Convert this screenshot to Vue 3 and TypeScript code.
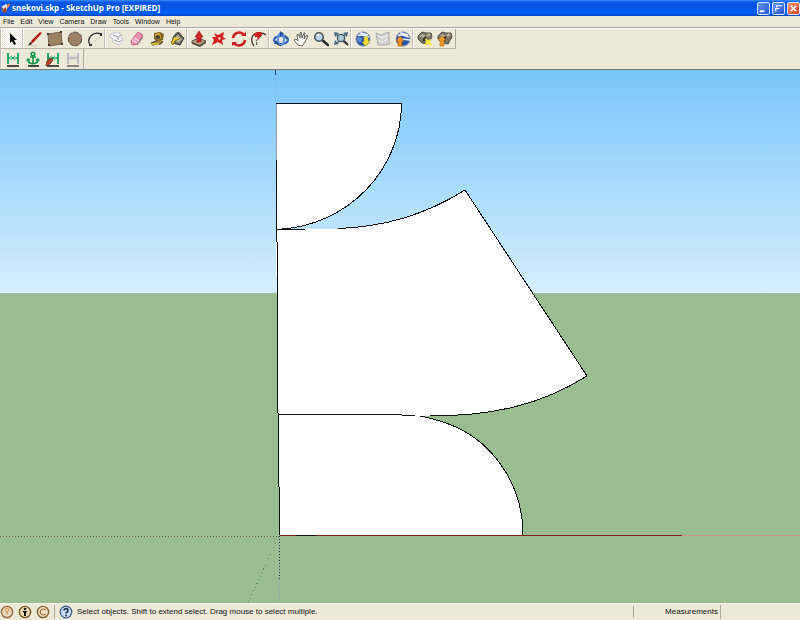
<script setup lang="ts">
interface Tool { name: string; kind: string }

const menus: string[] = ['File', 'Edit', 'View', 'Camera', 'Draw', 'Tools', 'Window', 'Help']

const groups: Tool[][] = [
  [{ name: 'Select', kind: 'select' }],
  [
    { name: 'Line', kind: 'line' },
    { name: 'Rectangle', kind: 'rect' },
    { name: 'Circle', kind: 'circle' },
    { name: 'Arc', kind: 'arc' },
  ],
  [
    { name: 'Make Component', kind: 'component' },
    { name: 'Eraser', kind: 'eraser' },
    { name: 'Tape Measure', kind: 'tape' },
    { name: 'Paint Bucket', kind: 'paint' },
  ],
  [
    { name: 'Push/Pull', kind: 'push' },
    { name: 'Move', kind: 'move' },
    { name: 'Rotate', kind: 'rotate' },
    { name: 'Offset', kind: 'offset' },
  ],
  [
    { name: 'Orbit', kind: 'orbit' },
    { name: 'Pan', kind: 'pan' },
    { name: 'Zoom', kind: 'zoom' },
    { name: 'Zoom Extents', kind: 'extents' },
  ],
  [
    { name: 'Get Current View', kind: 'getview' },
    { name: 'Toggle Terrain', kind: 'terrain' },
    { name: 'Place Model', kind: 'place' },
  ],
  [
    { name: 'Get Models', kind: 'getmodels' },
    { name: 'Share Model', kind: 'share' },
  ],
]

const extras: Tool[] = [
  { name: 'Dimension', kind: 'dim' },
  { name: 'Anchor', kind: 'anchor' },
  { name: 'Edit Dimension', kind: 'dimedit' },
  { name: 'Dimension Off', kind: 'dimoff' },
]
</script>

<template>
  <div class="window">
    <header class="title">
      <svg class="logo" viewBox="0 0 12 12" aria-hidden="true">
        <path d="M1 5 6 2l2 2-2 6-4-1z" fill="#e8e4e0" />
        <path d="M2 8l4-3 1 5-3 1z" fill="#a34a32" />
        <path d="M7 3l3-2-1 4-2 1z" fill="#f08a4c" />
        <path d="M1 5l2 1-1 3z" fill="#283868" />
      </svg>
      <h1>snekovi.skp - SketchUp Pro [EXPIRED]</h1>
      <div class="controls">
        <button type="button" aria-label="Minimize">
          <svg viewBox="0 0 12 12"><path d="M2 9h5" stroke="#fff" stroke-width="2" /></svg>
        </button>
        <button type="button" aria-label="Restore">
          <svg viewBox="0 0 12 12"><path d="M4 5V3h6M3 9V6h4" fill="none" stroke="#fff" stroke-width="1.3" /></svg>
        </button>
        <button type="button" class="close" aria-label="Close">
          <svg viewBox="0 0 12 12"><path d="M3 3l6 6M9 3L3 9" stroke="#fff" stroke-width="1.6" /></svg>
        </button>
      </div>
    </header>

    <nav class="menu">
      <button v-for="m in menus" :key="m" type="button">{{ m }}</button>
    </nav>

    <div class="bars">
      <div v-for="(row, r) in [groups, [extras]]" :key="r" class="bar">
        <div v-for="(group, i) in row" :key="i" class="group">
          <button
            v-for="t in group"
            :key="t.kind"
            type="button"
            :class="{ active: t.kind === 'select' }"
            :aria-label="t.name"
          >
            <svg viewBox="0 0 16 16">
              <path v-if="t.kind === 'select'" d="M5 2v10l2-2 2 4 2-1-2-4h3z" fill="#0a0a0a" />
              <g v-else-if="t.kind === 'line'">
                <path d="M2 14 5 9l8-8 2 1-8 9z" fill="#cf2020" />
                <path d="M5 10 13 2" stroke="#7c1010" />
                <path d="M1 15l2-4 2 2z" fill="#222" />
                <path d="M4 15h6" stroke="#c9bba8" />
              </g>
              <g v-else-if="t.kind === 'rect'">
                <path d="M1 3 14 1l1 12-13 2z" fill="#9b8064" stroke="#75604c" />
                <path d="M0 2h2v2H0zM13 0h2v2h-2zM1 13h2v2H1zM14 12h2v2h-2z" fill="#3c3228" />
              </g>
              <circle v-else-if="t.kind === 'circle'" cx="8" cy="8" r="6.8" fill="#9b8064" stroke="#4c4238" stroke-dasharray="5 1" />
              <g v-else-if="t.kind === 'arc'">
                <path d="M3 14C-1 7 6 0 14 3" fill="none" stroke="#282828" stroke-width="1.2" />
                <path d="M4 14 14 4" stroke="#cdc8bc" stroke-dasharray="2 1" />
                <path d="M13 2h2v3h-2zM2 13h3v2H2z" fill="#333" />
              </g>
              <g v-else-if="t.kind === 'component'">
                <path d="M2 3l6-2 5 3-1 3 3 2-5 5-7-3 1-3-3-2z" fill="#f6f6f8" stroke="#c4c4ca" />
                <path d="M4 4l5 2 3-2M5 9l5 2 3-2M9 6v3" fill="none" stroke="#9c9ca4" />
              </g>
              <g v-else-if="t.kind === 'eraser'">
                <path d="M2 10 9 1l5 3-6 9-5 1z" fill="#f08cac" stroke="#c46484" />
                <path d="M3 9l5 3M5 7l5 3" stroke="#fbd0dc" stroke-width="1.5" />
                <path d="M8 14l6-8" stroke="#746068" />
              </g>
              <g v-else-if="t.kind === 'tape'">
                <path d="M5 2l6-1 4 2-1 6-5 2-4-3z" fill="#7c6428" />
                <path d="M6 3l5-1 1 5-4 2z" fill="#dcae20" />
                <circle cx="9" cy="6" r="2" fill="#3c3c38" />
                <path d="M9 9 2 12l1 2 9-1 2-3" fill="#a08838" stroke="#3c3a34" />
                <path d="M2 13h8" stroke="#ecd040" stroke-width="1.4" />
              </g>
              <g v-else-if="t.kind === 'paint'">
                <path d="M4 6l5-4 6 5-4 7-7-2z" fill="#75726a" stroke="#333" />
                <path d="M8 4l5 4-4 4-3-3z" fill="#bcb9ae" />
                <path d="M5 6 2 12l2 2 2-4 6-3" fill="#e4c735" stroke="#806e18" />
                <path d="M6 5c0-5 7-5 6 1" fill="none" stroke="#393939" />
              </g>
              <g v-else-if="t.kind === 'push'">
                <path d="M1 10l6-3 8 3-6 5-8-3z" fill="#b09c80" stroke="#5c5042" />
                <path d="M1 11l8 3v2l-8-3zM9 14l6-4v2l-6 4z" fill="#5c5040" />
                <path d="M6 11V6H4l4-6 4 6h-2v5z" fill="#d02020" stroke="#8b1515" stroke-width=".6" />
              </g>
              <g v-else-if="t.kind === 'move'">
                <path d="M3 2l4 2 6-3-1 5 3 2-4 1 1 5-5-3-6 3 2-5-2-3 4 0z" fill="#d32020" />
                <path d="M8 6l2 1-1 2-2-1z" fill="#eadccb" />
              </g>
              <g v-else-if="t.kind === 'rotate'" fill="none" stroke="#c82020" stroke-width="2.6">
                <path d="M2 7c1-6 8-7 11-3M14 9c-1 6-8 7-11 3" />
                <path d="M10 5h5V1zM6 11H1v4z" fill="#c82020" stroke="none" />
              </g>
              <g v-else-if="t.kind === 'offset'" fill="none">
                <path d="M3 15C-1 10 0 2 8 2c3 0 5 0 7 2" stroke="#4a302c" stroke-width="1.3" />
                <path d="M6 14c-2-4 1-8 5-9" stroke="#4c3028" stroke-dasharray="3 1" />
                <path d="M3 3c2-2 4-2 7-2l1 4-2 0-1 4-2-3-2 0z" fill="#cc2020" />
              </g>
              <g v-else-if="t.kind === 'orbit'" fill="none" stroke="#3567bc">
                <ellipse cx="8" cy="9" rx="7" ry="4" stroke-width="2.2" />
                <ellipse cx="8" cy="8" rx="3" ry="6" stroke-width="2" stroke="#5b90dc" />
                <path d="M7 0l4 3-4 2zM3 9l3 4H1z" fill="#284e94" stroke="none" />
                <path d="M12 4l3 4M4 13l4 2" stroke="#323c50" />
              </g>
              <path v-else-if="t.kind === 'pan'" d="M5 14 1 9l2-1 2 2-1-6 1-1 2 4 0-5 1-1 1 6 2-5h1l-1 6 3-4 1 1-3 6-3 4z" fill="#fff" stroke="#50504c" stroke-width=".9" />
              <g v-else-if="t.kind === 'zoom'">
                <path d="m9 9 6 5" stroke="#26282a" stroke-width="2.6" stroke-linecap="round" />
                <circle cx="6" cy="6" r="4.2" fill="#b8d4e8" stroke="#47545c" stroke-width="1.6" />
                <path d="M4 5l2-2" stroke="#fff" stroke-width="1.5" />
              </g>
              <g v-else-if="t.kind === 'extents'">
                <path d="M1 1l5 1-4 4zM15 1l-5 1 4 4zM1 14l1-5 4 4z" fill="#4c6a80" />
                <path d="M3 3l9 9M13 3l-9 9" stroke="#4c6a80" stroke-width="1.4" />
                <circle cx="8" cy="7" r="3.6" fill="#adcbdd" stroke="#41586a" stroke-width="1.4" />
                <path d="m11 10 4 4" stroke="#292d30" stroke-width="2" />
              </g>
              <g v-else-if="t.kind === 'getview' || t.kind === 'place'">
                <circle cx="8" cy="8" r="7" fill="#2c55a8" stroke="#7c8ba6" />
                <path d="M3 5c3-3 7 0 11 1M5 2c3 0 4 1 8 2" fill="none" stroke="#e7eef7" stroke-width="1.6" />
                <path v-if="t.kind === 'getview'" d="M2 8c1-3 4-2 5 0l-1 3-3 0z" fill="#5c8cd8" />
                <path v-else d="M6 9c3-2 5 0 9 0" fill="none" stroke="#e7eef7" stroke-width="1.6" />
                <path v-if="t.kind === 'getview'" d="M9 6h4v4h2l-4 5-4-4h2z" fill="#f6e033" stroke="#c5a91e" stroke-width=".6" />
                <path v-else d="M3 15v-5H1l4-5 4 5H7v5z" fill="#ee9320" stroke="#a85c12" stroke-width=".6" />
              </g>
              <g v-else-if="t.kind === 'terrain'">
                <path d="M1 2l5 2 8-3 0 9 1 3-6 1-6 0z" fill="#d2d2d2" stroke="#acacac" />
                <path d="M3 5l4 2 6-3M4 10l4 1 5-3" fill="none" stroke="#f0f0f0" />
              </g>
              <g v-else-if="t.kind === 'getmodels' || t.kind === 'share'">
                <path d="M1 5l4-4 4 1 5 0 1 4-4 7-6-1-4-4z" fill="#7e7464" stroke="#565046" />
                <path d="M2 5l4-2 3 2-3 2zM9 4l3-2 2 2-3 2z" fill="#b4aa98" />
                <path d="M6 7l3-2v4l-3 2z" fill="#38332b" />
                <path v-if="t.kind === 'getmodels'" d="M8 7l3 2 3-1-1 3 3 4-5-2-4 2 2-4z" fill="#f5e63c" />
                <path v-else d="M3 15V9H1l4-4 4 4H7v6z" fill="#f09a28" stroke="#a86518" stroke-width=".6" />
              </g>
              <g v-else-if="t.kind === 'anchor'" fill="none" stroke="#13994d" stroke-width="1.6">
                <circle cx="8" cy="3" r="1.8" />
                <path d="M8 5v8M5 6h6M3 9c1 5 9 5 10 0M2 10l1-2 2 1M14 10l-1-2-2 1" />
                <path d="M3 15h11" stroke="#202020" />
              </g>
              <g v-else>
                <path d="M3 2v11M13 2v11M3 7h10" fill="none" :stroke="t.kind === 'dimoff' ? '#b8b7c0' : '#19a05c'" stroke-width="1.8" />
                <path d="M7 4 4 7l3 3zM9 4l3 3-3 3z" :fill="t.kind === 'dimoff' ? '#c8c7ce' : '#7cc8a0'" />
                <path d="M2 15h12" :stroke="t.kind === 'dimoff' ? '#6c6c6c' : '#222'" stroke-width="1.6" />
                <path v-if="t.kind === 'dimedit'" d="M1 15l1-5 4-3 2 2-3 4z" fill="#b8432d" stroke="#71412b" />
              </g>
            </svg>
          </button>
        </div>
      </div>
    </div>

    <main class="scene">
      <svg viewBox="0 0 800 533" preserveAspectRatio="none" role="img" aria-label="Model view">
        <g fill="#fff" stroke="none" shape-rendering="crispEdges">
          <path d="M276 33H402C402 98 350 156 277 160H276z" />
          <path d="M276 159H338C386 157 427 144 465 120L587 306C541 335 492 346 430 346L402 345H278z" />
          <path d="M278 344H402L420 346C430 348 436 350 443 352C490 367 523 412 523 465H279z" />
        </g>
        <g fill="none" stroke="#101010" stroke-width="1" shape-rendering="crispEdges">
          <path d="M276 33.500H402" />
          <path d="M401.500 34C401 98 350 156 277 159.500" />
          <path d="M276.500 90V172M277.500 172V343M278.500 343V417M279.500 417V465" />
          <path d="M276.500 34V90" stroke="#8c98a4" />
          <path d="M277 159.500H305M338 158.500C386 157 427 144 465 120L587 306C541 335 492 346 430 346" />
          <path d="M278 344.500H402M402 345.500H415M420 346C428 347 436 350 443 352C490 367 523 412 523 465" />
          <path d="M275.500 0V5" stroke="#24406c" />
        </g>
        <g shape-rendering="crispEdges">
          <rect x="280" y="465" width="402" height="1" fill="#861c1c" />
          <rect x="682" y="465" width="118" height="1" fill="#cf9684" />
          <rect x="296" y="465" width="20" height="1" fill="#111" />
        </g>
        <g fill="none" shape-rendering="crispEdges">
          <path d="M0 466.500H279" stroke="#6e5548" stroke-dasharray="1 2" />
          <path d="M279.500 466V510" stroke="#28384c" stroke-dasharray="1 2" />
          <path d="M279.500 510V533" stroke="#869fc0" stroke-dasharray="1 2" />
          <path d="M279 466 248 533" stroke="#64895e" stroke-dasharray="1 3" />
          <path d="M275.500 5V33" stroke="#82b2e8" stroke-dasharray="1 1" />
        </g>
      </svg>
    </main>

    <footer class="status">
      <div class="badges">
        <svg viewBox="0 0 14 14"><circle cx="7" cy="7" r="5.6" fill="#ead9bd" stroke="#93683a" stroke-width="1.4" /><path d="M7 10V6M5 5a2 2 0 1 1 4 0L7 8z" fill="#f5c9a0" stroke="#cf9662" /></svg>
        <svg viewBox="0 0 14 14"><circle cx="7" cy="7" r="5.6" fill="#eedfb9" stroke="#7a5625" stroke-width="1.4" /><circle cx="7" cy="4" r="1.3" fill="#111" /><path d="M4.500 6h5L8 8v3H6V8z" fill="#111" /></svg>
        <svg viewBox="0 0 14 14"><circle cx="7" cy="7" r="5.6" fill="#eee0c2" stroke="#85602f" stroke-width="1.4" /><path d="M9.500 5a3 3 0 1 0 0 4" fill="none" stroke="#9d7440" stroke-width="1.2" /></svg>
      </div>
      <button type="button" class="help" aria-label="Help">
        <svg viewBox="0 0 14 14"><circle cx="7" cy="7" r="5.8" fill="#c5dcf0" stroke="#34587e" stroke-width="1.2" /><path d="M5 5.500a2 2 0 1 1 3 1.700q-1 .5-1 1.300M7 9.800v1.400" fill="none" stroke="#10233c" stroke-width="1.5" /></svg>
      </button>
      <p>Select objects. Shift to extend select. Drag mouse to select multiple.</p>
      <label for="measure">Measurements</label>
      <input id="measure" type="text" />
    </footer>
  </div>
</template>

<style>
body { margin: 0; }
</style>

<style scoped>
.window {
  display: flex;
  flex-direction: column;
  min-height: 100vh;
  background: #ece9d8;
  color: #111;
  font: 8px/12px "Liberation Sans", Arial, sans-serif;
}
button {
  padding: 0;
  border: 0;
  background: none;
  font: inherit;
  color: inherit;
}
svg { display: block; }
.title {
  display: flex;
  align-items: center;
  height: 16px;
  background: linear-gradient(#3c90ff 0, #0c58e4 2px, #0454e2 8px, #0462fa 13px, #0344bc 16px);
  color: #fff;
}
.logo { width: 12px; height: 12px; }
h1 {
  flex: 1;
  margin: 0;
  font: bold 8px/16px "Open Sans", "Noto Sans", sans-serif;
}
.controls { display: flex; gap: 2px; }
.controls button {
  width: 13px;
  height: 13px;
  border: 1px solid #d8e6fb;
  border-radius: 2px;
  background: linear-gradient(135deg, #6e98f0, #2253cb);
  box-sizing: border-box;
}
.controls svg { width: 11px; height: 11px; }
.controls .close { background: linear-gradient(135deg, #ee9478, #cf4020); }
.menu {
  display: flex;
  gap: 6px;
  height: 11px;
  padding: 0 3px;
  border-bottom: 1px solid #aca899;
  font-size: 7px;
}
.bars {
  border-top: 1px solid #fff;
  border-bottom: 1px solid #77776c;
}
.bar {
  display: flex;
  width: fit-content;
  height: 19px;
  padding-left: 1px;
  border-right: 1px solid #aca899;
  border-bottom: 1px solid #b8b4a5;
}
.bar + .bar { border-bottom-color: #ece9d8; }
.group {
  display: flex;
  padding-left: 1px;
  border-left: 1px solid #fff;
  box-shadow: -1px 0 #c4c0b0;
}
.group button {
  display: grid;
  place-items: center;
  width: 20px;
  height: 19px;
}
.group button svg { width: 16px; height: 16px; }
.group .active { background: repeating-conic-gradient(#fff 0 25%, #ebe8dc 0 50%) 0 0 / 2px 2px; }
.scene {
  flex: 1;
  display: grid;
  min-height: 0;
  background: linear-gradient(#78c6fc 0, #d6eefc 41.8%, #99bc91 41.8%, #99bc91);
}
.scene svg { width: 100%; height: 100%; min-height: 0; }
.status {
  display: flex;
  align-items: center;
  height: 17px;
  border-top: 1px solid #f4f2e8;
  box-sizing: border-box;
}
.badges { display: flex; gap: 4px; padding-right: 4px; border-right: 1px solid #aca899; }
.status svg { width: 14px; height: 14px; }
.help { padding: 0 4px; }
.status p { flex: 1; margin: 0; white-space: nowrap; }
.status label {
  width: 84px;
  padding-right: 2px;
  border-left: 1px solid #aca899;
  text-align: right;
}
.status input {
  width: 80px;
  height: 14px;
  padding: 0;
  border: 0;
  border-left: 1px solid #aca899;
  background: transparent;
  font: inherit;
  box-sizing: border-box;
}
</style>
